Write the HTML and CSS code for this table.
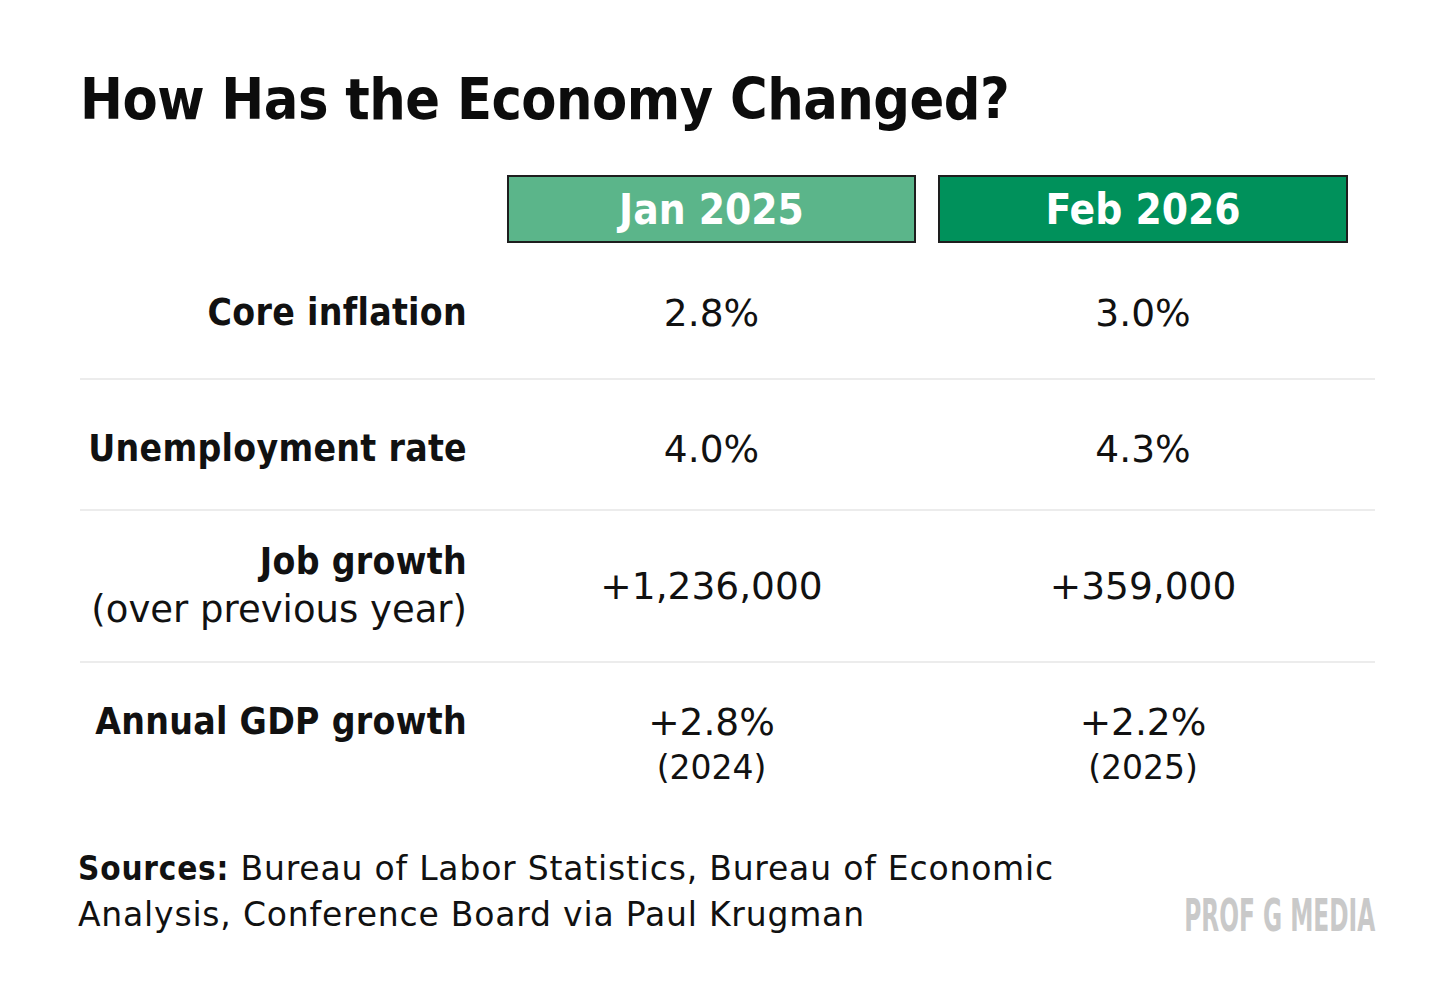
FILE: index.html
```html
<!DOCTYPE html>
<html>
<head>
<meta charset="utf-8">
<link rel="stylesheet" href="styles.css">
</head>
<body>
<div class="page">
  <h1 class="title">How Has the Economy Changed?</h1>
  <div class="table">
    <div class="row head">
      <div class="label"></div>
      <div class="cell c1"><div class="hbox light">Jan 2025</div></div>
      <div class="cell c2"><div class="hbox dark">Feb 2026</div></div>
    </div>
    <div class="row r1">
      <div class="label"><b>Core inflation</b></div>
      <div class="cell c1">2.8%</div>
      <div class="cell c2">3.0%</div>
    </div>
    <div class="row r2">
      <div class="label"><b>Unemployment rate</b></div>
      <div class="cell c1">4.0%</div>
      <div class="cell c2">4.3%</div>
    </div>
    <div class="row r3">
      <div class="label"><b>Job growth</b><br>(over previous year)</div>
      <div class="cell c1">+1,236,000</div>
      <div class="cell c2">+359,000</div>
    </div>
    <div class="row r4">
      <div class="label"><b>Annual GDP growth</b></div>
      <div class="cell c1">+2.8%<span class="sub">(2024)</span></div>
      <div class="cell c2">+2.2%<span class="sub">(2025)</span></div>
    </div>
  </div>
  <div class="footer">
    <p class="sources"><b>Sources:</b> Bureau of Labor Statistics, Bureau of Economic<br>Analysis, Conference Board via Paul Krugman</p>
    <div class="logo"><span>PROF G MEDIA</span></div>
  </div>
</div>
</body>
</html>
```

FILE: styles.css
```css
html, body {
  margin: 0;
  padding: 0;
  background: #ffffff;
}

body {
  font-family: "DejaVu Sans", sans-serif;
  color: #111111;
}

.page {
  width: 1456px;
  height: 1007px;
  box-sizing: border-box;
  padding: 71px 81px 0 80px;
}

.title {
  margin: 0;
  font-size: 57px;
  line-height: 57px;
  font-weight: 700;
  font-stretch: condensed;
  letter-spacing: -0.5px;
  color: #0c0c0c;
}

.table {
  margin-top: 47px;
}

.row {
  display: grid;
  grid-template-columns: 427px 431px 437px;
  align-items: center;
  box-sizing: border-box;
  border-bottom: 2px solid #ececec;
}

.label {
  text-align: right;
  padding-right: 40px;
  font-size: 37px;
  line-height: 48px;
}

.label b {
  font-weight: 700;
  font-stretch: condensed;
  letter-spacing: 0.3px;
}

.cell {
  text-align: center;
  font-size: 37.5px;
  line-height: 46px;
}

.c1 { padding-right: 22px; }
.c2 { padding-right: 27px; }

.head {
  border-bottom: none;
  height: 68px;
}

.hbox {
  height: 68px;
  box-sizing: border-box;
  border: 2px solid #1e1e1e;
  display: flex;
  align-items: center;
  justify-content: center;
  color: #ffffff;
  font-size: 42px;
  font-weight: 700;
  font-stretch: condensed;
  padding-top: 1px;
}

.light { background: #5bb58a; }
.dark { background: #00915b; }

.r1 { height: 137px; padding-top: 5px; }
.r2 { height: 131px; padding-top: 9px; }
.r3 { height: 152px; }
.r4 {
  border-bottom: none;
  align-items: start;
  padding-top: 36px;
}
.r4 .label { line-height: 46px; }

.sub {
  display: block;
  font-size: 33px;
  line-height: 46px;
}

.footer {
  margin-top: 55px;
  display: flex;
  justify-content: space-between;
  align-items: flex-end;
}

.sources {
  margin: 0 0 0 -2px;
  font-size: 33px;
  line-height: 46px;
  letter-spacing: 0.8px;
  color: #111111;
}

.sources b {
  font-weight: 700;
  font-stretch: condensed;
}

.logo {
  width: 200px;
  height: 46px;
  display: flex;
  justify-content: flex-end;
  align-items: center;
  overflow: visible;
  white-space: nowrap;
}

.logo span {
  display: inline-block;
  font-size: 45px;
  font-weight: 700;
  font-stretch: condensed;
  color: #c9c9c9;
  transform: scaleX(0.575);
  transform-origin: right center;
}
```
